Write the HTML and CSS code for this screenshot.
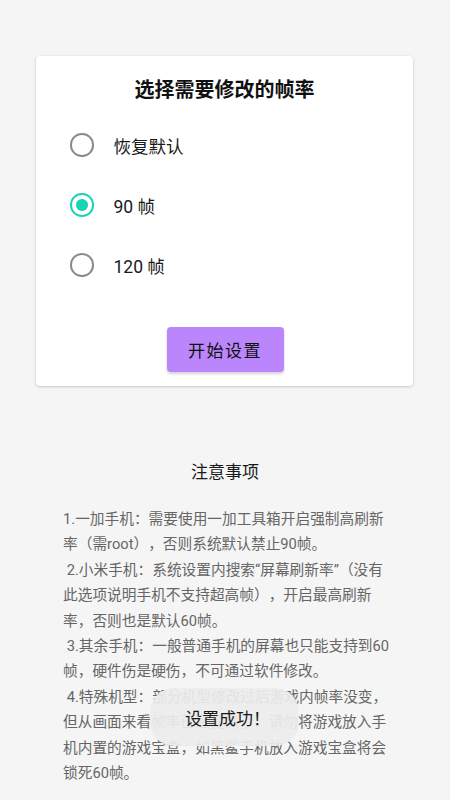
FILE: index.html
```html
<!DOCTYPE html>
<html lang="zh-CN">
<head>
<meta charset="utf-8">
<meta name="viewport" content="width=450">
<link rel="stylesheet" href="styles.css">
</head>
<body>
<main class="page">
  <section class="card">
    <h1 class="card-title">选择需要修改的帧率</h1>
    <div class="options">
      <label class="option"><span class="radio"></span><span class="option-text">恢复默认</span></label>
      <label class="option"><span class="radio checked"></span><span class="option-text">90 帧</span></label>
      <label class="option"><span class="radio"></span><span class="option-text">120 帧</span></label>
    </div>
    <div class="actions">
      <button class="btn">开始设置</button>
    </div>
  </section>
  <section class="notes">
    <h2 class="notes-title">注意事项</h2>
    <p class="notes-body">1.一加手机：需要使用一加工具箱开启强制高刷新率（需root），否则系统默认禁止90帧。
 2.小米手机：系统设置内搜索“屏幕刷新率”（没有此选项说明手机不支持超高帧），开启最高刷新率，否则也是默认60帧。
 3.其余手机：一般普通手机的屏幕也只能支持到60帧，硬件伤是硬伤，不可通过软件修改。
 4.特殊机型：部分机型修改过后游戏内帧率没变，但从画面来看帧率已经提高了，请勿将游戏放入手机内置的游戏宝盒，如黑鲨手机放入游戏宝盒将会锁死60帧。</p>
  </section>
  <div class="toast">设置成功！</div>
</main>
</body>
</html>
```
FILE: styles.css
```css
html, body {
  margin: 0;
  padding: 0;
}
body {
  background: #f5f5f5;
  font-family: Roboto, "Noto Sans CJK SC", sans-serif;
  color: #1a1a1a;
  width: 450px;
  height: 800px;
  overflow: hidden;
}
.page {
  position: relative;
  height: 800px;
  padding-top: 56px;
  box-sizing: border-box;
}
.card {
  margin: 0 37px 0 36px;
  background: #fff;
  border-radius: 4px;
  box-shadow: 0 1px 3px rgba(0,0,0,0.18), 0 0 1px rgba(0,0,0,0.08);
  padding: 20px 0 14px;
}
.card-title {
  margin: 0;
  text-align: center;
  font-size: 20px;
  line-height: 28px;
  font-weight: 700;
  color: #111;
}
.options {
  margin-top: 11px;
  display: flex;
  flex-direction: column;
}
.option {
  height: 60px;
  display: flex;
  align-items: center;
  padding-left: 34px;
}
.radio {
  width: 19.5px;
  height: 19.5px;
  border: 2.75px solid #8a8a8a;
  border-radius: 50%;
  display: flex;
  align-items: center;
  justify-content: center;
  flex: none;
}
.radio.checked {
  border-color: #1ad3b6;
}
.radio.checked::after {
  content: "";
  width: 11.5px;
  height: 11.5px;
  border-radius: 50%;
  background: #1ad3b6;
}
.option-text {
  margin-left: 20px;
  font-size: 17.5px;
  color: #1a1a1a;
}
.actions {
  margin-top: 32px;
  display: flex;
  justify-content: center;
  padding-left: 1px;
}
.btn {
  width: 117px;
  height: 45px;
  border: none;
  border-radius: 4px;
  background: #bb86fc;
  color: #111;
  font-family: Roboto, "Noto Sans CJK SC", sans-serif;
  font-size: 17px;
  letter-spacing: 1.5px;
  box-shadow: 0 2px 3px rgba(0,0,0,0.18);
  padding: 0;
}
.notes {
  margin-top: 74px;
}
.notes-title {
  margin: 0;
  text-align: center;
  font-size: 17px;
  line-height: 24px;
  font-weight: 400;
  color: #1a1a1a;
}
.notes-body {
  margin: 23px 57px 0 63px;
  font-size: 14.7px;
  line-height: 25.4px;
  color: #666;
  white-space: pre-wrap;
  word-break: break-all;
  text-spacing-trim: space-all;
}
.toast {
  position: absolute;
  left: 150px;
  top: 688px;
  width: 149px;
  height: 58px;
  box-sizing: border-box;
  border-radius: 24px;
  background: rgba(236,236,236,0.93);
  display: flex;
  align-items: center;
  justify-content: center;
  font-size: 17px;
  color: #1a1a1a;
  padding-left: 6px;
}
```
